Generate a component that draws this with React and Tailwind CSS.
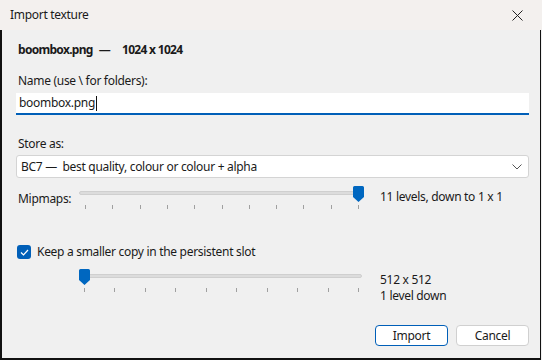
import React from "react";

const F = { fontFamily: '"Noto Sans", "Open Sans", sans-serif' };

function Slider({ ticks, start, end, thumb, trackStart, trackEnd }) {
  const tickXs = [];
  for (let i = 0; i < ticks; i++) tickXs.push(start + ((end - start) * i) / (ticks - 1));
  return (
    <div className="relative h-[24px] shrink-0" style={{ width: trackEnd + 4 }}>
      <div
        className="absolute top-[5px] h-[4px] rounded-[2px] bg-[#dcdcdc] border border-[#cfcfcf]"
        style={{ left: trackStart, width: trackEnd - trackStart }}
      />
      {tickXs.map((x, i) => (
        <div key={i} className="absolute top-[19px] h-[4px] w-px bg-[#a0a0a0]" style={{ left: Math.round(x) }} />
      ))}
      <svg className="absolute top-0" style={{ left: thumb - 5 }} width="11" height="16" viewBox="0 0 11 16">
        <path d="M1.5 0 H9.5 A1.5 1.5 0 0 1 11 1.5 V11 L5.5 16 L0 11 V1.5 A1.5 1.5 0 0 1 1.5 0 Z" fill="#0067c0" />
      </svg>
    </div>
  );
}

export default function App() {
  return (
    <div className="w-[542px] h-[360px] flex flex-col text-[12px] leading-[18px] tracking-[-0.3px] text-[#1a1a1a] bg-[#f0f0f0]" style={F}>
      <div className="h-[30px] bg-[#f3f0ee] flex items-center justify-between pl-[10px] pr-[19px] shrink-0">
        <span className="text-[12px] text-[#1a1a1a]">Import texture</span>
        <svg width="11" height="11" viewBox="0 0 11 11">
          <path d="M0.5 0.5 L10.5 10.5 M10.5 0.5 L0.5 10.5" stroke="#222" strokeWidth="1" />
        </svg>
      </div>
      <div className="flex-1 bg-[#f0f0f0] border-l-2 border-r border-b-2 border-[#111] mr-px flex flex-col pl-[14px] pr-[11px]">
        <div className="pt-[11px] flex pl-[2px] font-bold tracking-[-0.7px]">
          <span>boombox.png</span>
          <span className="ml-[6px]">—</span>
          <span className="ml-[12px]">1024 x 1024</span>
        </div>
        <div className="mt-[13px] pl-[2px]">Name (use \ for folders):</div>
        <div className="mt-[3px] h-[22px] bg-white border-b-2 border-[#005fb8] flex items-center pl-[3px]">
          <span>boombox.png</span>
          <span className="w-px h-[15px] bg-[#111] ml-px" />
        </div>
        <div className="mt-[20px] pl-[2px]">Store as:</div>
        <div className="mt-[2px] h-[23px] bg-white border border-[#d4d4d4] rounded-[3px] flex items-center justify-between pl-[4px] pr-[6px]">
          <span>BC7 — &nbsp;best quality, colour or colour + alpha</span>
          <svg width="10" height="6" viewBox="0 0 10 6">
            <path d="M0.5 0.5 L5 5 L9.5 0.5" stroke="#555" strokeWidth="1" fill="none" />
          </svg>
        </div>
        <div className="mt-[8px] flex items-start">
          <span className="pl-[2px] pt-[4px] w-[63px] shrink-0">Mipmaps:</span>
          <Slider ticks={11} start={6} end={279} thumb={279} trackStart={0} trackEnd={285} />
          <span className="ml-[12px] pt-[2px]">11 levels, down to 1 x 1</span>
        </div>
        <div className="mt-[33px] flex items-center pl-[1px]">
          <div className="w-[14px] h-[14px] rounded-[3px] bg-[#005fb8] flex items-center justify-center">
            <svg width="9" height="7" viewBox="0 0 9 7">
              <path d="M1 3.5 L3.5 6 L8 1" stroke="white" strokeWidth="1.2" fill="none" />
            </svg>
          </div>
          <span className="ml-[6px]">Keep a smaller copy in the persistent slot</span>
        </div>
        <div className="mt-[8px] flex items-start pl-[63px]">
          <Slider ticks={10} start={5} end={279} thumb={5} trackStart={5} trackEnd={283} />
          <div className="ml-[14px] pt-[3px] leading-[16px]">
            <div>512 x 512</div>
            <div>1 level down</div>
          </div>
        </div>
        <div className="mt-auto mb-[12px] flex justify-end gap-[8px]">
          <button className="w-[73px] h-[21px] bg-white border border-[#005fb8] rounded-[4px] text-[12px] leading-none">Import</button>
          <button className="w-[73px] h-[21px] bg-white border border-[#d0d0d0] rounded-[4px] text-[12px] leading-none">Cancel</button>
        </div>
      </div>
    </div>
  );
}
